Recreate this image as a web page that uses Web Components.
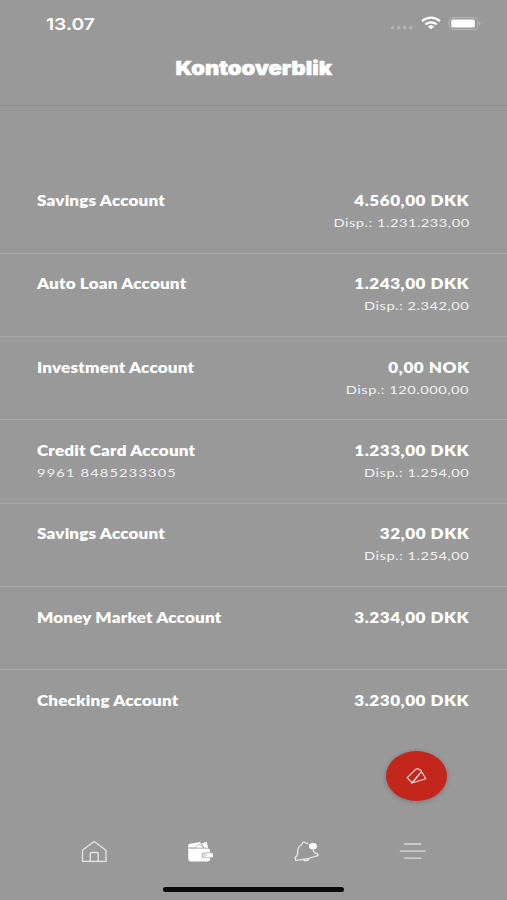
<!DOCTYPE html>
<html lang="da">
<head>
<meta charset="UTF-8">
<meta name="viewport" content="width=device-width, initial-scale=1">
<title>Kontooverblik</title>
<style>
  body {
    margin: 0;
    height: 900px;
    background: #999;
    color: #fff;
    font-family: Lato, "Open Sans", sans-serif;
    overflow: hidden;
  }
</style>
</head>
<body>
<bank-app>
  <status-bar slot="top">13.07</status-bar>
  <page-header slot="top">Kontooverblik</page-header>
  <account-row name="Savings Account" amount="4.560,00 DKK" disp="Disp.: 1.231.233,00"></account-row>
  <account-row name="Auto Loan Account" amount="1.243,00 DKK" disp="Disp.: 2.342,00"></account-row>
  <account-row name="Investment Account" amount="0,00 NOK" disp="Disp.: 120.000,00"></account-row>
  <account-row name="Credit Card Account" number="9961 8485233305" amount="1.233,00 DKK" disp="Disp.: 1.254,00"></account-row>
  <account-row name="Savings Account" amount="32,00 DKK" disp="Disp.: 1.254,00"></account-row>
  <account-row name="Money Market Account" amount="3.234,00 DKK"></account-row>
  <account-row name="Checking Account" amount="3.230,00 DKK"></account-row>
  <transfer-button slot="float"></transfer-button>
  <tab-bar slot="bottom"></tab-bar>
</bank-app>

<script>
  class BaseElement extends HTMLElement {
    constructor() {
      super();
      const shadow = this.attachShadow({ mode: "open" });
      const template = document.createElement("template");
      template.innerHTML = this.render();
      shadow.appendChild(template.content.cloneNode(true));
    }
  }

  // App shell: header on top, list in the middle, tabs at the bottom
  customElements.define("bank-app", class extends BaseElement {
    render() {
      return `
        <style>
          :host { display: flex; flex-direction: column; position: relative; height: 900px; }
          main { flex: 1; min-height: 0; overflow: hidden; padding-top: 64.5px; }
          .float { position: absolute; left: 386px; top: 751px; }
        </style>
        <slot name="top"></slot>
        <main><slot></slot></main>
        <div class="float"><slot name="float"></slot></div>
        <slot name="bottom"></slot>
      `;
    }
  });

  customElements.define("status-bar", class extends BaseElement {
    render() {
      return `
        <style>
          :host {
            display: flex; justify-content: space-between; align-items: center;
            box-sizing: border-box; height: 46px; padding: 0 26px 0 46px;
            font-family: Inter, Roboto, sans-serif;
          }
          .time {
            font-size: 16px; font-weight: 600; line-height: 20px; padding-top: 2px;
            transform: scaleX(1.2); transform-origin: left;
          }
          svg { display: block; }
        </style>
        <span class="time"><slot></slot></span>
        <svg width="92" height="16" viewBox="0 0 92 16" fill="none">
          <g fill="#b4b4b4">
            <circle cx="3.6" cy="12.7" r="1.7"/><circle cx="9.7" cy="12.7" r="1.7"/>
            <circle cx="15.8" cy="12.7" r="1.7"/><circle cx="21.9" cy="12.7" r="1.7"/>
          </g>
          <g stroke="#fff" stroke-width="2.2">
            <path d="M33 6.2Q42 -.8 51 6.2"/>
            <path d="M36.3 9.4Q42 5.2 47.7 9.4"/>
          </g>
          <path d="M38.8 11.6Q42 9 45.2 11.6L42 14.2Z" fill="#fff"/>
          <rect x="60" y="2.6" width="29" height="12" rx="4" stroke="#b8b8b8" stroke-width="1"/>
          <rect x="62.3" y="4.6" width="23.5" height="8" rx="1.6" fill="#fff"/>
          <path d="M90.2 6.6Q92.8 8.6 90.2 10.6Z" fill="#b8b8b8"/>
        </svg>
      `;
    }
  });

  customElements.define("page-header", class extends BaseElement {
    render() {
      return `
        <style>
          :host {
            display: flex; justify-content: center; box-sizing: border-box;
            height: 60px; padding-top: 11px; border-bottom: 1px solid #8f8f8f;
          }
          h1 {
            margin: 0; font-family: Inter, Roboto, sans-serif;
            font-size: 19px; line-height: 24px; font-weight: 900;
            -webkit-text-stroke: 0.5px #fff;
            transform: scaleX(1.155);
          }
        </style>
        <h1><slot></slot></h1>
      `;
    }
  });

  class AccountRow extends HTMLElement {
    constructor() {
      super();
      const shadow = this.attachShadow({ mode: "open" });
      const get = (key) => this.getAttribute(key) || "";
      const template = document.createElement("template");
      template.innerHTML = `
        <style>
          :host {
            display: flex; justify-content: space-between; box-sizing: border-box;
            height: 83.33px; padding: 19.4px 37.5px 0 37px; border-bottom: 1px solid #a9a9a9;
          }
          :host(:last-of-type) { border-bottom: 0; }
          .col { display: flex; flex-direction: column; align-items: flex-start; }
          .right { align-items: flex-end; }
          span {
            display: block; white-space: nowrap;
            transform: scaleX(1.22); transform-origin: left;
          }
          .right span { transform-origin: right; }
          .strong { font-size: 14px; line-height: 22px; font-weight: 800; letter-spacing: 0.13px; }
          .right .strong { letter-spacing: 0.42px; }
          .light { font-size: 12px; line-height: 22px; color: #f0f0f0; letter-spacing: 0.42px; }
          .number { letter-spacing: 0.95px; }
        </style>
        <div class="col">
          <span class="strong">${get("name")}</span>
          <span class="light number">${get("number")}</span>
        </div>
        <div class="col right">
          <span class="strong">${get("amount")}</span>
          <span class="light">${get("disp")}</span>
        </div>
      `;
      shadow.appendChild(template.content.cloneNode(true));
    }
  }
  customElements.define("account-row", AccountRow);

  customElements.define("transfer-button", class extends BaseElement {
    render() {
      return `
        <style>
          :host { display: block; }
          button {
            display: flex; align-items: center; justify-content: center;
            width: 61px; height: 50px; padding: 0; border: 0; border-radius: 50%;
            background: #c3271b; box-shadow: 0 1px 5px rgba(0, 0, 0, 0.22);
          }
        </style>
        <button aria-label="Overfør">
          <svg width="22" height="18" viewBox="0 0 22 18" fill="none" stroke="#ffd9d3" stroke-width="1.2" stroke-linejoin="round">
            <path d="M6 16L1.3 10.6L9.6 2.4Q10.7 1.4 12 1.9L14.6 3.3Q15.8 4.1 15 5.2L6 16Z"/>
            <path d="M15 5.2Q16.4 5.6 17 7L19.8 11.8L6 16L13 7.6"/>
          </svg>
        </button>
      `;
    }
  });

  customElements.define("tab-bar", class extends BaseElement {
    render() {
      return `
        <style>
          :host { display: flex; flex-direction: column; align-items: center; height: 72px; }
          nav {
            display: flex; justify-content: space-between; align-self: stretch;
            height: 58.5px; padding: 10.5px 80px 0; box-sizing: border-box;
          }
          svg { display: block; }
          .indicator { width: 181px; height: 5.5px; border-radius: 3px; background: #0b0b0b; }
        </style>
        <nav>
          <svg width="28" height="26" viewBox="0 0 28 26" fill="none" stroke="#e6e6e6" stroke-width="1.3">
            <path d="M2.5 11.3L14.2 2.5L26 11.3V22.3H2.5Z"/>
            <path d="M10.3 22V14.7Q10.3 13.5 11.5 13.5H17Q18.2 13.5 18.2 14.7V22"/>
          </svg>
          <svg width="28" height="26" viewBox="0 0 28 26">
            <path d="M2.3 8V20.2Q2.3 22.5 4.8 22.5H21.6Q24 22.5 24 20.5V11.5Q24 9.6 21.6 9.6H4Q2.3 9.6 2.3 8Z" fill="#fff"/>
            <path d="M2.3 8.6V6Q2.3 4.9 4 4.8L14 3L17.3 8.8Z" fill="#fff"/>
            <path d="M15.8 4.4L20.6 2.8L22.2 8.9H18.4Z" fill="#fff"/>
            <path d="M4.5 9H8.2L13 5.2L17.8 9H21" fill="none" stroke="#b4b4b4" stroke-width=".8"/>
            <path d="M27 13.6H19Q15.6 13.6 15.6 16.2T19 18.8H27Z" fill="#a4a4a4"/>
            <path d="M26.8 14.2H19.3Q16.6 14.2 16.6 16.2T19.3 18.2H26.8Z" fill="#fff"/>
            <circle cx="19" cy="16.2" r="1" fill="none" stroke="#aaa" stroke-width=".7"/>
          </svg>
          <svg width="28" height="26" viewBox="0 0 28 26" fill="none" stroke="#e6e6e6" stroke-width="1.3" stroke-linejoin="round">
            <path d="M15.5 4.4Q13.2 4.8 12.6 3.7Q10.6 2.2 9.2 4.3Q9.4 5.3 8 6Q4.5 8 4.8 12.5Q4.9 16.5 2 18.8L2.6 21.3L13.5 20L25 16.7L24.7 15Q20.7 14 20 10.9"/>
            <path d="M10 20.8Q13.5 23.2 16.4 19.5"/>
            <ellipse cx="20" cy="7.2" rx="3.9" ry="3.3" fill="#fff" stroke="none"/>
          </svg>
          <svg width="28" height="26" viewBox="0 0 28 26" stroke="#dcdcdc" stroke-width="1.3">
            <path d="M5.3 5H22.3M.8 12.2H26.8M5.3 19.2H22.3"/>
          </svg>
        </nav>
        <div class="indicator"></div>
      `;
    }
  });
</script>
</body>
</html>
